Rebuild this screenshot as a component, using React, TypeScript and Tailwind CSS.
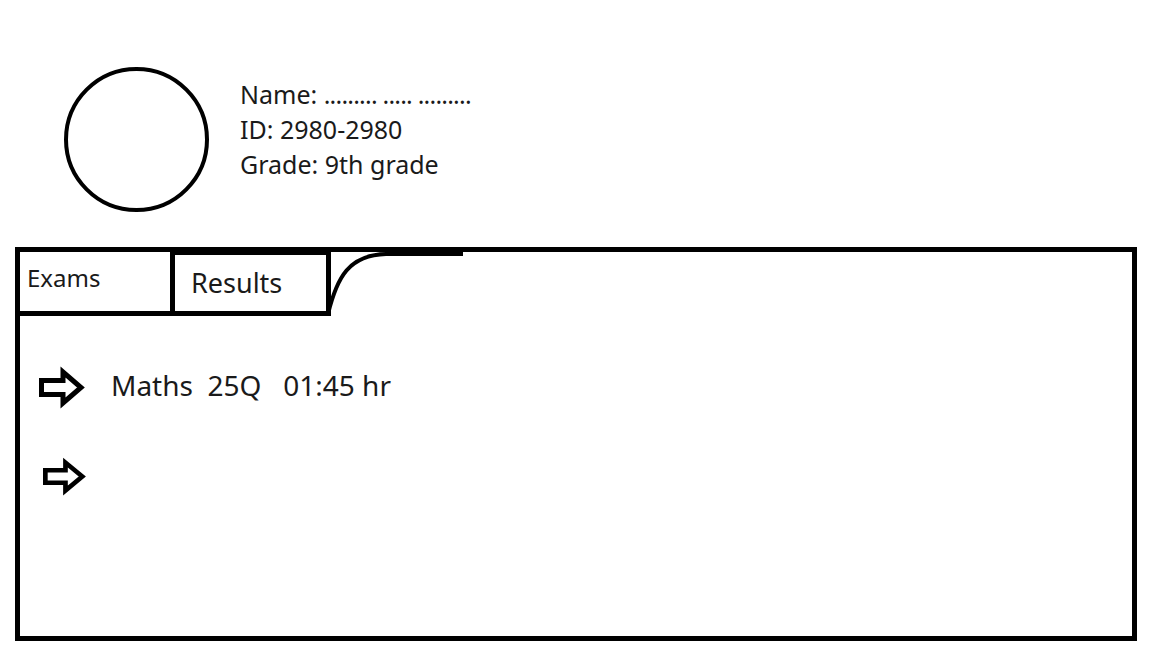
import React from "react";

function Arrow({ w, h }: { w: number; h: number }) {
  return (
    <svg width={w} height={h} viewBox="0 0 47 40" preserveAspectRatio="none" className="shrink-0 overflow-visible">
      <path
        d="M2.5 12.5 H24 V4 L42 19.5 L24 35 V26.5 H2.5 Z"
        fill="white"
        stroke="black"
        strokeWidth="5"
        strokeLinejoin="miter"
      />
    </svg>
  );
}

export default function App() {
  return (
    <div
      className="w-[1152px] h-[648px] bg-white overflow-hidden text-[#1a1a1a]"
      style={{ fontFamily: '"Noto Sans", "Open Sans", sans-serif' }}
    >
      <div className="flex items-start pl-[64px] pt-[67px]">
        <div className="w-[145px] h-[145px] rounded-full border-4 border-black shrink-0" />
        <div className="ml-[31px] mt-[10px] text-[25px] leading-[35px]">
          <div>
            Name: <span className="tracking-[-0.8px]">......... ..... .........</span>
          </div>
          <div>ID: 2980-2980</div>
          <div>Grade: 9th grade</div>
        </div>
      </div>

      <div className="ml-[15px] mt-[35px] w-[1122px] h-[394px] border-[5px] border-black">
        <div className="flex h-[64px]">
          <div className="w-[155px] h-[64px] border-r-[5px] border-b-[5px] border-black flex items-center pl-[7px] pb-[7px] text-[24px] leading-[30px]">
            Exams
          </div>
          <div className="w-[156px] h-[64px] border-t-[3px] border-r-[5px] border-b-[5px] border-black flex items-center pl-[16px] text-[27px] leading-[30px]">
            Results
          </div>
          <svg width="135" height="64" viewBox="0 0 135 64" className="overflow-visible shrink-0">
            <path d="M-3 62 C 6 25, 18 3, 55 2 L 132 2" fill="none" stroke="black" strokeWidth="4" />
          </svg>
        </div>

        <div className="flex flex-col pl-[19px]">
          <div className="flex items-center mt-[52px]">
            <Arrow w={47} h={40} />
            <span className="ml-[25px] text-[28px] leading-[30px] whitespace-pre -mt-[7px]">
              {"Maths  25Q   01:45 hr"}
            </span>
          </div>
          <div className="flex items-center mt-[51px] pl-[4px]">
            <Arrow w={44} h={36} />
          </div>
        </div>
      </div>
    </div>
  );
}
